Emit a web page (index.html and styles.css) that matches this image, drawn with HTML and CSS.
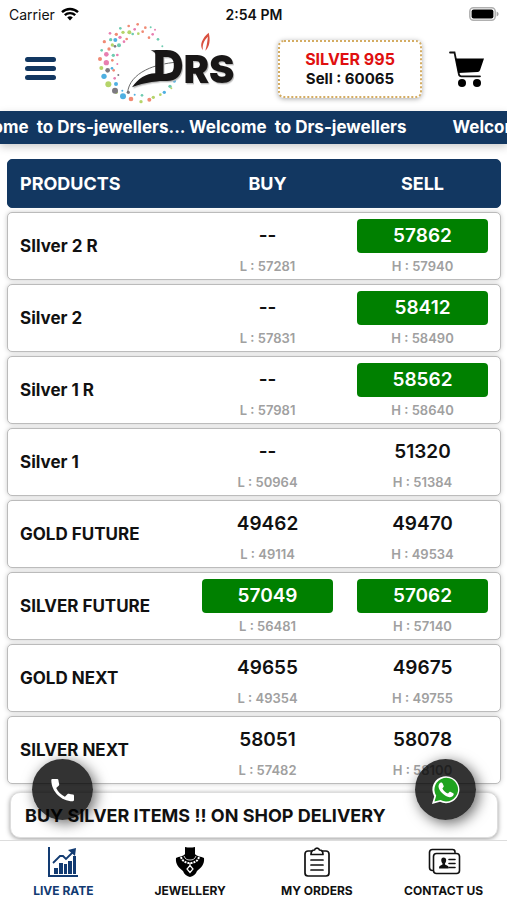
FILE: index.html
```
<!DOCTYPE html>
<html lang="en">
<head>
<meta charset="UTF-8">
<meta name="viewport" content="width=device-width, initial-scale=1">
<title>DRS Jewellers - Live Rate</title>
<link rel="stylesheet" href="styles.css">
</head>
<body>
<div class="status">
  <div class="carrier">Carrier
    <svg width="18" height="14" viewBox="0 0 18 14" fill="none" stroke="#000" stroke-width="2.4">
      <path d="M1 5.2a11.5 11.5 0 0 1 16 0M3.8 8.2a7.5 7.5 0 0 1 10.4 0"/>
      <path d="M9 13.4L6.2 10.6a4 4 0 0 1 5.6 0z" fill="#000" stroke="none"/>
    </svg>
  </div>
  <div class="time">2:54 PM</div>
  <div class="battery">
    <svg width="30" height="14" viewBox="0 0 30 14">
      <rect x=".8" y=".8" width="25.4" height="12.4" rx="3.6" fill="#fff" stroke="#b0b0b0" stroke-width="1.5"/>
      <rect x="2.6" y="2.6" width="21.8" height="8.8" rx="2" fill="#000"/>
      <path d="M27.6 4.6c2.6.9 2.6 3.9 0 4.8z" fill="#a5a5a5"/>
    </svg>
  </div>
</div>

<header class="top">
  <button class="menu" aria-label="Menu"><span></span><span></span><span></span></button>
  <svg class="logo" width="150" height="90" viewBox="0 0 450 270" role="img" aria-label="DRS">
    <g fill="#f08a74">
      <circle cx="143" cy="13" r="4"/><circle cx="116" cy="18" r="4"/><circle cx="79" cy="43" r="5"/><circle cx="166" cy="23" r="4"/><circle cx="43" cy="65" r="5"/><circle cx="30" cy="117" r="6"/><circle cx="57" cy="87" r="5"/><circle cx="123" cy="237" r="7"/><circle cx="178" cy="239" r="6"/><circle cx="110" cy="57" r="4"/><circle cx="158" cy="35" r="4"/><circle cx="177" cy="53" r="4"/><circle cx="67" cy="121" r="4"/><circle cx="71" cy="151" r="4"/>
    </g>
    <g fill="#e87fb0">
      <circle cx="60" cy="40" r="4"/><circle cx="90" cy="52" r="5"/><circle cx="134" cy="28" r="4"/><circle cx="188" cy="43" r="4"/><circle cx="49" cy="103" r="7"/><circle cx="49" cy="128" r="8"/><circle cx="82" cy="105" r="4"/><circle cx="102" cy="65" r="4"/><circle cx="74" cy="175" r="4"/><circle cx="82" cy="132" r="3"/><circle cx="195" cy="29" r="3"/>
    </g>
    <g fill="#6fcbb0">
      <circle cx="35" cy="91" r="4"/><circle cx="62" cy="59" r="5"/><circle cx="91" cy="25" r="4"/><circle cx="128" cy="42" r="4"/><circle cx="87" cy="76" r="6"/><circle cx="182" cy="22" r="3"/><circle cx="204" cy="58" r="4"/><circle cx="70" cy="106" r="5"/><circle cx="156" cy="226" r="4"/><circle cx="240" cy="199" r="5"/><circle cx="217" cy="79" r="3"/>
    </g>
    <g fill="#b5d46a">
      <circle cx="99" cy="37" r="5"/><circle cx="118" cy="37" r="6"/><circle cx="145" cy="41" r="4"/><circle cx="67" cy="75" r="5"/><circle cx="34" cy="144" r="6"/><circle cx="55" cy="193" r="9"/><circle cx="79" cy="217" r="5"/><circle cx="153" cy="245" r="5"/><circle cx="190" cy="232" r="5"/><circle cx="211" cy="224" r="4"/><circle cx="244" cy="205" r="3"/>
    </g>
    <g fill="#4fb0e2">
      <circle cx="76" cy="60" r="6"/><circle cx="42" cy="169" r="8"/><circle cx="78" cy="192" r="6"/><circle cx="99" cy="229" r="9"/><circle cx="223" cy="217" r="5"/><circle cx="253" cy="183" r="5"/><circle cx="66" cy="145" r="4"/><circle cx="134" cy="224" r="3"/><circle cx="97" cy="212" r="3"/>
    </g>
    <g fill="#7d7a80">
      <circle cx="53" cy="151" r="7"/><circle cx="75" cy="212" r="9"/><circle cx="75" cy="79" r="4"/><circle cx="115" cy="217" r="5"/><circle cx="85" cy="165" r="3"/>
    </g>
    <path d="M113 218C115 190 135 166 167 150C195 136 225 130 263 126" fill="none" stroke="#6b6b6b" stroke-width="3"/>
    <g class="logo-mark">
      <text x="190" y="182" font-size="126">D</text>
      <text x="281" y="190" font-size="114">R</text>
      <text x="357" y="190" font-size="114">S</text>
      <path d="M182 91L230 91L224 107H199C198 99 192 95 182 91Z"/>
      <path d="M126 202C146 172 174 156 205 160C225 165 238 160 252 154L243 176C207 186 164 184 126 202Z"/>
    </g>
    <path d="M339 91C326 75 338 53 356 38C362 60 359 80 346 92C352 72 352 60 354 50C341 62 336 76 339 91Z" fill="#d9503f"/>
  </svg>
  <div class="spot">
    <div class="spot-name">SILVER 995</div>
    <div class="spot-rate">Sell : 60065</div>
  </div>
  <button class="cart" aria-label="Cart">
    <svg width="36" height="36" viewBox="0 0 36 36">
      <path d="M1 1.5h4.5l4.4 21.8a2.5 2.5 0 0 0 2.500 2H31" fill="none" stroke="#111" stroke-width="1.8" stroke-linecap="round"/>
      <path d="M6.5 7.5H35l-4 11.8a2.5 2.5 0 0 1-2.2 1.6L9.2 22z"/>
      <circle cx="13" cy="32" r="4"/><circle cx="28" cy="32" r="4"/>
    </svg>
  </button>
</header>

<div class="ticker">
  <div class="ticker-track"><span>Welcome  to Drs-jewellers... Welcome  to Drs-jewellers</span><span>Welcome  to Drs-jewellers</span></div>
</div>

<main>
  <table class="rates">
    <thead>
      <tr><th scope="col">PRODUCTS</th><th scope="col">BUY</th><th scope="col">SELL</th></tr>
    </thead>
    <tbody>
      <tr><th scope="row">SIlver 2 R</th><td><b>--</b><small>L : 57281</small></td><td><b class="up">57862</b><small>H : 57940</small></td></tr>
      <tr><th scope="row">Silver 2</th><td><b>--</b><small>L : 57831</small></td><td><b class="up">58412</b><small>H : 58490</small></td></tr>
      <tr><th scope="row">Silver 1 R</th><td><b>--</b><small>L : 57981</small></td><td><b class="up">58562</b><small>H : 58640</small></td></tr>
      <tr><th scope="row">Silver 1</th><td><b>--</b><small>L : 50964</small></td><td><b>51320</b><small>H : 51384</small></td></tr>
      <tr><th scope="row">GOLD FUTURE</th><td><b>49462</b><small>L : 49114</small></td><td><b>49470</b><small>H : 49534</small></td></tr>
      <tr><th scope="row">SILVER FUTURE</th><td><b class="up">57049</b><small>L : 56481</small></td><td><b class="up">57062</b><small>H : 57140</small></td></tr>
      <tr><th scope="row">GOLD NEXT</th><td><b>49655</b><small>L : 49354</small></td><td><b>49675</b><small>H : 49755</small></td></tr>
      <tr><th scope="row">SILVER NEXT</th><td><b>58051</b><small>L : 57482</small></td><td><b>58078</b><small>H : 58100</small></td></tr>
    </tbody>
  </table>
  <div class="notice">BUY SILVER ITEMS !! ON SHOP DELIVERY</div>
</main>

<button class="fab call" aria-label="Call us">
  <svg width="24" height="24" viewBox="0 0 24 24" fill="#fff">
    <path d="M1.5 1h4.7c.7 0 1.1.4 1.2 1.1.1 1.4.4 2.7.8 4 .1.5 0 1-.3 1.3L5.2 10.1a18 18 0 0 0 8.7 8.7l2.7-2.7c.4-.4.8-.4 1.3-.3 1.3.4 2.6.6 4 .7.7.1 1.1.5 1.1 1.2v4.3c0 .7-.5 1.2-1.2 1.2C10 23.2.5 13.5.3 2.2.3 1.5.8 1 1.5 1z"/>
  </svg>
</button>
<button class="fab chat" aria-label="WhatsApp">
  <svg width="30" height="30" viewBox="0 0 30 30">
    <path d="M1 29l2.2-7.6A13.5 13.5 0 1 1 9 26.8z" fill="#fff"/>
    <path d="M3.500 26.500l1.700-5.700A11.800 11.800 0 1 1 9.500 24.900z" fill="#1fa31f"/>
    <path d="M10.2 7.5c.6 0 1 .1 1.3.8l1.2 2.7c.2.7-.2 1.2-1.3 2.4 1.3 2.5 3 4 5.6 5.2 1.4-1.7 1.7-2 2.3-1.8l2.9 1.4c.6.3.6.7.4 1.5-.5 1.6-2.2 2.6-4 2.5-4.6-.4-10.9-6.3-11.1-10.7 0-1.9 1.3-4 2.7-4z" fill="#fff"/>
  </svg>
</button>

<nav class="tabs">
  <a href="#rates" class="active">
    <svg width="32" height="32" viewBox="0 0 32 32" fill="#123b72">
      <path d="M1 1h2v28h28v2H1z"/>
      <path d="M7 22h4v6H7zM12 17h4v11h-4zM17 18h3v10h-3zM21 15h4v13h-4zM26 10h3v18h-3z"/>
      <path d="M6 17l7-7h3l3 3 7-7" fill="none" stroke="#123b72" stroke-width="1.8"/>
      <path d="M21 4l8-2-1 8z"/>
    </svg>
    LIVE RATE
  </a>
  <a href="#jewellery">
    <svg width="32" height="32" viewBox="0 0 32 32">
      <path d="M11 1q5 1 10 0v7c2 3 6 2 9 4 .8 6-3 10-7 13-1 3-4 5.5-7 6-3-.5-6-3-7-6C5 22 1.200 18 2 12 5 10 9 11 11 8z"/>
      <g fill="none" stroke="#fff">
        <path d="M7 11c1 4 5 6 9 6s8-2 9-6" stroke-width="2" stroke-dasharray="2 1"/>
        <path d="M10 10c1 3 3 4 6 4s5-1 6-4" stroke-width=".8"/>
        <path d="M16 17v3M16 19.5l3 3.5-3 3.5-3-3.5z" stroke-width="1.2"/>
      </g>
    </svg>
    JEWELLERY
  </a>
  <a href="#orders">
    <svg width="32" height="32" viewBox="0 0 32 32" fill="none" stroke="#111" stroke-width="1.7" stroke-linecap="round" stroke-linejoin="round">
      <path d="M10.5 5H7a3 3 0 0 0-3 3v19a3 3 0 0 0 3 3h18a3 3 0 0 0 3-3V8a3 3 0 0 0-3-3h-3.5"/>
      <path d="M10 8.5c0-3 1-4.5 3.5-4.5a2.6 2.6 0 0 1 5 0C21 4 22 5.5 22 8.5z"/>
      <path d="M10 14h12M10 19h12M10 24h12"/>
    </svg>
    MY ORDERS
  </a>
  <a href="#contact">
    <svg width="34" height="32" viewBox="0 0 34 32" fill="none" stroke="#111" stroke-width="1.6" stroke-linecap="round" stroke-linejoin="round">
      <path d="M28 6.5V6a2.5 2.5 0 0 0-2.5-2.5h-20a3 3 0 0 0-3 3v15a3 3 0 0 0 3 3"/>
      <rect x="6.5" y="7.5" width="26" height="20" rx="3"/>
      <path d="M22 13.5h6M22 17.5h6M22 21.5h6"/>
      <path d="M16.5 11.5c3 0 3.500 3.500 1.500 6v1l3 1.5c.6.5.6 1.500.6 2.500h-9.500c0-1 0-2 .6-2.500l2.800-1.500v-1c-2-2.500-1.500-6 1-6z" fill="#111" stroke="none"/>
    </svg>
    CONTACT US
  </a>
</nav>
</body>
</html>
```
FILE: styles.css
```
* {
    box-sizing: border-box;
}
body {
    margin: 0;
    min-height: 100vh;
    display: flex;
    flex-direction: column;
    background: #fff;
    color: #111;
    font-family: Inter, "Liberation Sans", sans-serif;
    font-weight: 700;
}
button {
    border: 0;
    padding: 0;
    background: none;
    cursor: pointer;
}
svg {
    display: block;
}

/* status bar */
.status {
    display: grid;
    grid-template-columns: 1fr auto 1fr;
    align-items: center;
    height: 28px;
    padding: 0 8px 0 9px;
    font-size: 14px;
}
.carrier {
    display: flex;
    align-items: center;
    gap: 6px;
    font-weight: 400;
}
.time {
    font-weight: 600;
}
.battery {
    justify-self: end;
}

/* header */
.top {
    display: flex;
    align-items: center;
    height: 83px;
    padding: 0 22px 2px 25px;
}
.menu {
    display: grid;
    gap: 4px;
    width: 31px;
}
.menu span {
    height: 5px;
    border-radius: 3px;
    background: #123761;
}
.logo {
    margin: 0 auto 8px 34px;
    flex: none;
}
.logo-mark {
    font-family: Inter, "Liberation Sans", sans-serif;
    font-weight: 900;
    fill: #191717;
    filter: drop-shadow(3px 4px 2px #bbb);
}
.spot {
    width: 144px;
    padding: 8px 0;
    border: 2px dotted #d4ac62;
    border-radius: 6px;
    box-shadow: 0 1px 5px #aaa;
    background: #fff;
    text-align: center;
    line-height: 19px;
}
.spot-name {
    color: #e01010;
    font-size: 16px;
}
.spot-rate {
    font-size: 15px;
}
.cart {
    margin-left: 27px;
}

/* scrolling text */
.ticker {
    overflow: hidden;
    height: 33px;
    background: #123761;
    box-shadow: 0 3px 8px #ccc;
    color: #fff;
    font-size: 17px;
    line-height: 33px;
}
.ticker-track {
    display: flex;
    gap: 46px;
    margin-left: -49px;
    white-space: pre;
}

/* rates */
main {
    flex: 1;
    padding: 15px 6px 2px 7px;
}
.rates {
    display: block;
}
.rates thead,
.rates tbody {
    display: grid;
    gap: 4px;
}
.rates tr {
    display: grid;
    grid-template-columns: 74fr 63fr 63fr;
    align-items: center;
    border: 1px solid #bbb;
    border-radius: 5px;
    background: #fff;
    box-shadow: 0 0 5px #ccc;
}
.rates th,
.rates td {
    padding: 0 12px;
    text-align: center;
}
.rates th:first-child {
    text-align: left;
    white-space: nowrap;
}
.rates th {
    font-size: 17px;
}
.rates thead {
    margin-bottom: 4px;
}
.rates thead tr {
    height: 49px;
    border-color: #123761;
    background: #123761;
    box-shadow: none;
    color: #fff;
}
.rates thead th {
    font-size: 18px;
}
.rates tbody tr {
    height: 68px;
}
.rates td {
    align-self: start;
    padding-top: 6px;
}
.rates b {
    display: block;
    height: 34px;
    border-radius: 4px;
    font-size: 19px;
    font-weight: 600;
    line-height: 34px;
}
.rates .up {
    background: #008000;
    color: #fff;
}
.rates small {
    display: block;
    margin-top: 4px;
    color: #a0a0a0;
    font-size: 13px;
    font-weight: 600;
    line-height: 18px;
}
.notice {
    margin: 8px 3px 0;
    padding: 2px 14px 0;
    border-radius: 10px;
    border: 1px solid #ddd;
    box-shadow: 0 1px 5px #999;
    background: #fff;
    font-size: 18px;
    line-height: 42px;
    white-space: nowrap;
    overflow: hidden;
}

/* floating buttons */
.fab {
    position: fixed;
    bottom: 80px;
    display: grid;
    place-items: center;
    width: 61px;
    height: 61px;
    border-radius: 50%;
    background: rgba(0, 0, 0, .8);
    box-shadow: 3px 3px 14px rgba(0, 0, 0, .6);
}
.call {
    left: 32px;
}
.chat {
    right: 31px;
}

/* bottom tabs */
.tabs {
    display: grid;
    grid-template-columns: repeat(4, 1fr);
    height: 60px;
    border-top: 1px solid #ddd;
    background: #fff;
}
.tabs a {
    display: flex;
    flex-direction: column;
    align-items: center;
    gap: 3px;
    padding-top: 5px;
    color: #111;
    font-size: 12px;
    line-height: 20px;
    text-decoration: none;
}
.tabs .active {
    color: #123b72;
}
```
